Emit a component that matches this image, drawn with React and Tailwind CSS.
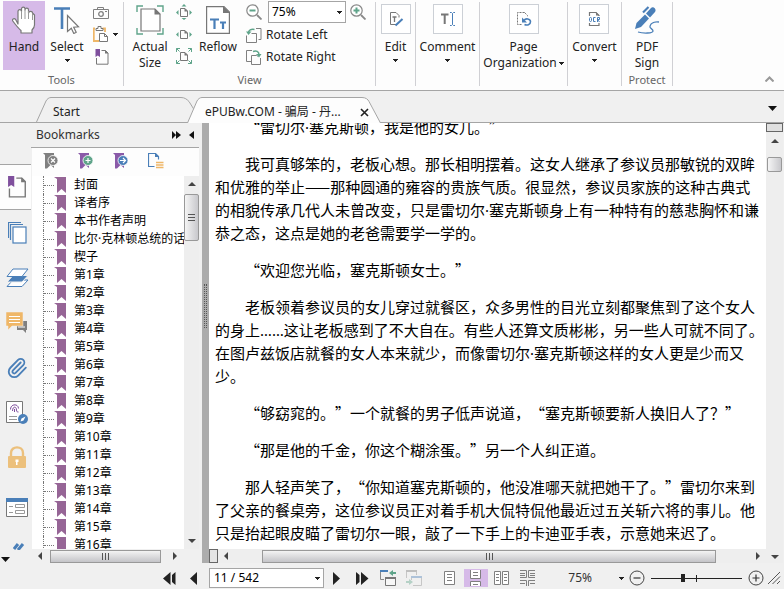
import React from 'react'
import { useState } from 'react'
import { Paperclip } from 'lucide-react'

const chapters = [
  '封面', '译者序', '本书作者声明', '比尔·克林顿总统的话', '楔子',
  '第1章', '第2章', '第3章', '第4章', '第5章', '第6章', '第7章', '第8章',
  '第9章', '第10章', '第11章', '第12章', '第13章', '第14章', '第15章', '第16章',
]

const paragraphs = [
  ['“雷切尔·塞克斯顿，我是他的女儿。”'],
  [
    '我可真够笨的，老板心想。那长相明摆着。这女人继承了参议员那敏锐的双眸',
    '和优雅的举止——那种圆通的雍容的贵族气质。很显然，参议员家族的这种古典式',
    '的相貌传承几代人未曾改变，只是雷切尔·塞克斯顿身上有一种特有的慈悲胸怀和谦',
    '恭之态，这点是她的老爸需要学一学的。',
  ],
  ['“欢迎您光临，塞克斯顿女士。”'],
  [
    '老板领着参议员的女儿穿过就餐区，众多男性的目光立刻都聚焦到了这个女人',
    '的身上……这让老板感到了不大自在。有些人还算文质彬彬，另一些人可就不同了。',
    '在图卢兹饭店就餐的女人本来就少，而像雷切尔·塞克斯顿这样的女人更是少而又',
    '少。',
  ],
  ['“够窈窕的。”一个就餐的男子低声说道，“塞克斯顿要新人换旧人了？”'],
  ['“那是他的千金，你这个糊涂蛋。”另一个人纠正道。'],
  [
    '那人轻声笑了，“你知道塞克斯顿的，他没准哪天就把她干了。”雷切尔来到',
    '了父亲的餐桌旁，这位参议员正对着手机大侃特侃他最近过五关斩六将的事儿。他',
    '只是抬起眼皮瞄了雷切尔一眼，敲了一下手上的卡迪亚手表，示意她来迟了。',
  ],
]

function Caret({ className = '' }) {
  return (
    <svg className={`w-[5px] h-[3px] shrink-0 ${className}`} viewBox="0 0 5 3" shapeRendering="crispEdges">
      <path d="M0 0h5L2.5 3z" fill="#222"/>
    </svg>
  )
}

function Icon({ w = 16, h = 16, children, className = '' }) {
  return (
    <svg width={w} height={h} viewBox={`0 0 ${w} ${h}`} fill="none" className={`shrink-0 ${className}`}>
      {children}
    </svg>
  )
}

/* ---------- ribbon icons ---------- */

function HandIcon() {
  return (
    <Icon w={24} h={28}>
      <path d="M6 18V5.500c0-2.500 3.500-2.500 3.500 0V3c0-2.500 3.500-2.500 3.500 0v1c0-2.500 3.500-2.500 3.500 0v3c.5-2.300 4-2.300 4 0L22.500 9v10c0 2-1 3.500-2.500 5V27H9v-2.500C6 22 3 18 .8 15c-1-1.700 1-3 2.700-1.800z" fill="#fff" stroke="#777" strokeWidth="1.2" strokeLinejoin="round"/>
      <path d="M9.500 5v8M13 4v9M16.500 5v8M20.500 8v6" stroke="#999"/>
    </Icon>
  )
}

function SelectIcon() {
  return (
    <Icon w={26} h={28}>
      <path d="M0 2.5h16M8 2.5V23" stroke="#4a7fb8" strokeWidth="2.6"/>
      <path d="M13.5 9.500v16l3.800-3.300 2.500 5.300 2.400-1.200-2.500-5.100 4.800-.4z" fill="#fff" stroke="#777" strokeWidth="1.2"/>
    </Icon>
  )
}

function CameraIcon() {
  return (
    <Icon w={16} h={13}>
      <path d="M.5 3.5h15v9H.5zM4.5 3.500v-2h6v2" stroke="#808080"/>
      <circle cx="8" cy="8" r="2.3" stroke="#808080" strokeWidth="1.3"/>
      <path d="M12 5.5h2" stroke="#808080"/>
    </Icon>
  )
}

function PasteIcon() {
  return (
    <Icon w={16} h={16}>
      <path d="M2 2.5H.8V15H6M9.500 2.500H12V6" stroke="#efb768" strokeWidth="1.8"/>
      <path d="M3 4.500v-2h2v-2h3v2h2v2z" fill="#fff" stroke="#777"/>
      <path d="M6.500 7.500h5l3 3v5h-8z" fill="#fff" stroke="#777"/>
      <path d="M11.500 7.500v3h3" stroke="#777"/>
    </Icon>
  )
}

function BookmarkPageIcon({ w = 14, h = 16 }) {
  return (
    <svg width={w} height={h} viewBox="0 0 14 16" fill="none" className="shrink-0">
      <path d="M6.500 1.500h4l2.500 2.500v11.200H1.500V9" stroke="#777"/>
      <path d="M10 1l3.500 3.500H10z" fill="#777"/>
      <path d="M.5 0h4.500v8L2.800 6.500.5 8z" fill="#7f4f9d"/>
    </svg>
  )
}

function ActualSizeIcon() {
  return (
    <Icon w={28} h={30}>
      <path d="M1 7V1h6M21 1h6v6M27 23v6h-6M7 29H1v-6" stroke="#5fa48a" strokeWidth="1.4"/>
      <path d="M5 4h14l5 5v17H5z" stroke="#777" strokeWidth="1.2" fill="#fff"/>
      <path d="M18.5 3.500v6H24.500z" fill="#777"/>
    </Icon>
  )
}

function FitIcon({ kind }) {
  return (
    <Icon w={16} h={16}>
      <path d="M4.500 4.500h4.500l2.500 2.500v5.500h-7z" stroke="#777"/>
      <path d="M8.500 4v3.500H12z" fill="#777"/>
      {kind !== 'visible' && <path d="M2.500 6v5L0 8.500zM13.500 6v5L16 8.500z" fill="#5fa48a"/>}
      {kind === 'page' && <path d="M5.500 2.500h5L8 0zM5.500 14h5L8 16z" fill="#5fa48a"/>}
      {kind === 'visible' && (
        <path d="M.5 4V.5H4M12 .5h3.500V4M15.500 12v3.500H12M4 15.500H.5V12M.5.5l3 3M15.500.5l-3 3M15.500 15.500l-3-3M.5 15.500l3-3" stroke="#5fa48a"/>
      )}
    </Icon>
  )
}

function ReflowIcon() {
  return (
    <Icon w={24} h={28}>
      <path d="M.6.6h17.400L23.400 6v21.400H.6z" fill="#fff" stroke="#777" strokeWidth="1.2"/>
      <path d="M17 0v7h7z" fill="#777"/>
      <path d="M4 13.500h9M8.500 13.500V23M14 16.500h6M17 16.500V23" stroke="#4a7fb8" strokeWidth="2.2"/>
    </Icon>
  )
}

function ZoomIcon({ plus }) {
  return (
    <Icon w={16} h={16}>
      <circle cx="6.5" cy="6.5" r="5.7" stroke="#888" strokeWidth="1.2" fill="#fff"/>
      <path d="M11 11l4.500 4.500" stroke="#888" strokeWidth="1.8"/>
      <path d={plus ? 'M3.500 6.500h6M6.500 3.500v6' : 'M3.500 6.500h6'} stroke="#5fa48a" strokeWidth="2"/>
    </Icon>
  )
}

function RotateIcon({ right }) {
  if (right) {
    return (
      <Icon w={16} h={16}>
        <path d="M5 12.500H.5v-11H6M5.500 6.500h5l1 1M5.500 6.500v9h9V9" stroke="#808080"/>
        <path d="M7 2.500c3-1.500 6 0 6 3" stroke="#5fa48a" strokeWidth="1.5"/>
        <path d="M10 5h5.500L13 8.500z" fill="#5fa48a"/>
      </Icon>
    )
  }
  return (
    <Icon w={16} h={16}>
      <path d="M.5 8.500v7h10v-9h-5M10 1.500h5v11h-2.500" stroke="#808080"/>
      <path d="M2.500 6c0-3 2.500-4 6-3.500" stroke="#5fa48a" strokeWidth="1.5"/>
      <path d="M0 4.500h5.500L2.500 8z" fill="#5fa48a"/>
    </Icon>
  )
}

function EditIcon() {
  return (
    <Icon w={16} h={16}>
      <path d="M2.500 1.500h5.500l3 3v2M2.500 1.500v12h6" stroke="#777"/>
      <path d="M4.500 6h4M6.500 6v5" stroke="#777" strokeWidth="1.3"/>
      <path d="M7.500 14.500l7-6.500" stroke="#4a7fb8" strokeWidth="2"/>
    </Icon>
  )
}

function CommentIcon() {
  return (
    <Icon w={16} h={16}>
      <path d="M1 3.500h7.500M4.700 3.500v9.500" stroke="#777" strokeWidth="2"/>
      <path d="M10 1.500h1.500l1 1 1-1H15M10 14.500h1.500l1-1 1 1H15M12.500 2.500v11" stroke="#4a7fb8"/>
    </Icon>
  )
}

function OrganizeIcon() {
  return (
    <Icon w={16} h={16}>
      <path d="M8.500 1.500h-7v12h5M8.500 1.500l3 3v1" stroke="#777" strokeDasharray="2 1"/>
      <path d="M8 9.500c1.500-2.500 6.500-2 6.500 1.200 0 3-3.500 4-6 2.800" stroke="#4a7fb8" strokeWidth="1.6"/>
      <path d="M6 6.500v5h5z" fill="#4a7fb8"/>
    </Icon>
  )
}

function OcrIcon() {
  return (
    <Icon w={16} h={16}>
      <path d="M3.500 5V1.500h6.500l3 3V5M3.500 12v2.500h9.500V12" stroke="#777" strokeWidth="1.2"/>
      <path d="M10 1v3.500h3.500z" fill="#777"/>
      <rect x="3.5" y="6.500" width="2" height="4" rx="1" stroke="#4a7fb8"/>
      <path d="M9.500 6.500h-2v4h2M11.500 11V6.500h2v2h-2l2 2.500" stroke="#4a7fb8"/>
    </Icon>
  )
}

function SignIcon() {
  return (
    <Icon w={26} h={28}>
      <path d="M1 23l1.500-6L11 8.500l4 4L7 21z" fill="#4a7fb8"/>
      <path d="M12 7.500l5-5.500c2-2 6 1 4 4l-5 5.500z" fill="#4a7fb8"/>
      <path d="M9 6.500L14.500 1" stroke="#4a7fb8" strokeWidth="2.2"/>
      <path d="M4 26c5 1.500 15 1.500 15-1 0-2.500-4-2.500-3-5 1-3 5-4.500 9-4" stroke="#4a7fb8" strokeWidth="1.3"/>
    </Icon>
  )
}

/* ---------- side rail icons ---------- */

function PagesIcon() {
  return (
    <Icon w={19} h={22}>
      <path d="M.5 16V.5H13M2.500 18V2.500H15" stroke="#4a7fb8" strokeWidth="1.2"/>
      <rect x="5" y="5" width="13" height="16" fill="#fff" stroke="#4a7fb8" strokeWidth="1.2"/>
    </Icon>
  )
}

function LayersIcon() {
  return (
    <Icon w={23} h={20}>
      <path d="M1 18.500L7 12h15l-6 6.500z" fill="#fff" stroke="#4a7fb8"/>
      <path d="M1 14l6-6.500h15L16 14z" fill="#4a7fb8" stroke="#f0f0f0"/>
      <path d="M1 8.500L7 1h15l-6 7.500z" fill="#fff" stroke="#4a7fb8"/>
    </Icon>
  )
}

function CommentsIcon() {
  return (
    <Icon w={22} h={22}>
      <path d="M11 9h10v9h-1v3l-3-3h-6z" fill="#808080"/>
      <path d="M12 15h7" stroke="#fff"/>
      <path d="M0 0h17v14H6l-4 4v-4H0z" fill="#efb768" stroke="#f0f0f0" strokeWidth=".5"/>
      <path d="M3 4.500h11M3 7.500h11M3 10.500h11" stroke="#fff"/>
    </Icon>
  )
}

function SignatureIcon() {
  return (
    <Icon w={22} h={23}>
      <path d="M.5.500h16v21H.5z" fill="#fff" stroke="#777"/>
      <path d="M4.500 8.500c0-6 8-6 8-1M6.500 10c0-5 4-5 4-1 0 2 1 2 2 2M8.500 11V8" stroke="#7f4f9d"/>
      <path d="M3 15.500h8M3 18.500h8" stroke="#999"/>
      <circle cx="17" cy="18" r="5" fill="#4a7fb8"/>
      <path d="M14.500 20.500l1-3 4-2-2 4z" fill="#fff"/>
    </Icon>
  )
}

function LockIcon() {
  return (
    <Icon w={18} h={23}>
      <path d="M3 11V7c0-7.500 12-7.500 12 0v4" stroke="#ecc07c" strokeWidth="2.4"/>
      <rect y="10" width="18" height="12" rx="1" fill="#ecc07c"/>
      <path d="M7.500 13.500h3v2.500h-1v3h-1.500v-3h-.5z" fill="#fff"/>
    </Icon>
  )
}

function FieldsIcon() {
  return (
    <Icon w={22} h={19}>
      <path d="M.5.500h21v18H.5z" fill="#fff" stroke="#777"/>
      <path d="M0 0h22v4H0z" fill="#4a7fb8"/>
      <path d="M3 8.500h4M3 14.500h4M9.500 6.500h9v3h-9zM9.500 12.500h9v3h-9z" stroke="#999"/>
    </Icon>
  )
}

/* ---------- bookmark panel icons ---------- */

function MarkAction({ color, badge, sign }) {
  return (
    <Icon w={16} h={16}>
      <path d="M0 0h11v15l-3.500-3L4 15.500H2V2z" fill={color}/>
      <circle cx="10" cy="7.5" r="5" fill={badge} stroke="#fff" strokeWidth=".8"/>
      <path d={sign} stroke="#fff" strokeWidth="1.2"/>
    </Icon>
  )
}

function ExpandIcon() {
  return (
    <Icon w={16} h={16}>
      <path d="M6.500 13.500h-6V.5h7l3 3v3" stroke="#4a7fb8" strokeWidth="1.2"/>
      <path d="M7 0v4h4z" fill="#4a7fb8"/>
      <path d="M8 9.500h7.500M8 12h7.500M8 14.500h7.500" stroke="#efb768" strokeWidth="1.5"/>
    </Icon>
  )
}

/* ---------- ribbon pieces ---------- */

function RibbonButton({ icon, label, lines, caret, inlineCaret, boxed, className = '' }) {
  return (
    <button className={`flex flex-col items-center shrink-0 text-xs ${className}`}>
      <span className={boxed
        ? 'flex items-center justify-center w-[30px] h-[30px] border border-[#ccd0d6] bg-white mb-[5px]'
        : 'flex items-center justify-center h-8 mb-[3px]'}>
        {icon}
      </span>
      {(lines || [label]).map((line, i, all) => (
        <span key={line} className="flex items-center gap-0.5 h-4 leading-4 whitespace-nowrap">
          {line}
          {inlineCaret && i === all.length - 1 && <Caret/>}
        </span>
      ))}
      {caret && <Caret className="mt-1"/>}
    </button>
  )
}

function GroupLabel({ children }) {
  return <div className="h-3 shrink-0 leading-3 text-center text-[11px] text-[#666]">{children}</div>
}

function Ribbon({ zoom, setZoom }) {
  return (
    <header className="flex h-[91px] shrink-0 pt-px bg-[#fdfdfd] border-b border-[#a5a5a5]">
      <section className="flex flex-col w-[124px] shrink-0 mt-px mb-1 border-r border-[#d0d0d4]">
        <div className="flex flex-1 min-h-0 pl-[3px]">
          <RibbonButton icon={<HandIcon/>} label="Hand" className="w-[42px] h-[69px] -mt-px pt-[3px] bg-[#d6bae8]"/>
          <RibbonButton icon={<SelectIcon/>} label="Select" caret className="w-11 pt-0.5"/>
          <div className="flex flex-col gap-[7px] pl-1 pt-1">
            <button aria-label="Snapshot"><CameraIcon/></button>
            <button aria-label="Clipboard" className="flex items-center gap-1"><PasteIcon/><Caret/></button>
            <button aria-label="Bookmark" className="pl-0.5"><BookmarkPageIcon/></button>
          </div>
        </div>
        <GroupLabel>Tools</GroupLabel>
      </section>

      <section className="flex flex-col w-[252px] shrink-0 mt-px mb-1 border-r border-[#d0d0d4]">
        <div className="flex flex-1 min-h-0">
          <RibbonButton icon={<ActualSizeIcon/>} lines={['Actual', 'Size']} className="w-[52px] pt-0.5"/>
          <div className="flex flex-col gap-1.5 pt-0.5">
            <button aria-label="Fit page"><FitIcon kind="page"/></button>
            <button aria-label="Fit width"><FitIcon kind="width"/></button>
            <button aria-label="Fit visible"><FitIcon kind="visible"/></button>
          </div>
          <RibbonButton icon={<ReflowIcon/>} label="Reflow" className="w-[52px] pt-0.5"/>
          <div className="flex flex-col pl-0.5 text-xs">
            <div className="flex items-center gap-1.5 h-[22px] -mt-px">
              <button aria-label="Zoom out"><ZoomIcon/></button>
              <label className="relative flex">
                <select aria-label="Zoom" value={zoom} onChange={e => setZoom(e.target.value)}
                  className="appearance-none w-[78px] h-[22px] pl-[3px] bg-white border border-[#a5a5a5] text-xs text-black outline-none">
                  <option>75%</option>
                  <option>100%</option>
                </select>
                <Caret className="absolute right-1 top-[10px] pointer-events-none"/>
              </label>
              <button aria-label="Zoom in" className="-ml-0.5"><ZoomIcon plus/></button>
            </div>
            <button className="flex items-center gap-1 h-[22px] mt-px"><RotateIcon/>Rotate Left</button>
            <button className="flex items-center gap-1 h-[22px]"><RotateIcon right/>Rotate Right</button>
          </div>
        </div>
        <GroupLabel>View</GroupLabel>
      </section>

      <div className="flex w-10 mt-px mb-1 shrink-0 justify-center border-r border-[#d0d0d4]">
        <RibbonButton boxed icon={<EditIcon/>} label="Edit" caret className="pt-0.5"/>
      </div>
      <div className="flex w-16 mt-px mb-1 shrink-0 justify-center border-r border-[#d0d0d4]">
        <RibbonButton boxed icon={<CommentIcon/>} label="Comment" caret className="pt-0.5"/>
      </div>
      <div className="flex w-[88px] mt-px mb-1 shrink-0 justify-center border-r border-[#d0d0d4]">
        <RibbonButton boxed icon={<OrganizeIcon/>} lines={['Page', 'Organization']} inlineCaret className="pt-0.5"/>
      </div>
      <div className="flex w-[54px] mt-px mb-1 shrink-0 justify-center border-r border-[#d0d0d4]">
        <RibbonButton boxed icon={<OcrIcon/>} label="Convert" caret className="pt-0.5"/>
      </div>
      <section className="flex flex-col w-[51px] shrink-0 mt-px mb-1 border-r border-[#d0d0d4]">
        <div className="flex flex-1 min-h-0 justify-center">
          <RibbonButton icon={<SignIcon/>} lines={['PDF', 'Sign']} className="pt-0.5"/>
        </div>
        <GroupLabel>Protect</GroupLabel>
      </section>
      <button aria-label="Collapse ribbon" className="self-end ml-auto mr-2.5 mb-2">
        <Icon w={9} h={6}><path d="M.5 5.500l4-4 4 4" stroke="#999" strokeWidth="2"/></Icon>
      </button>
    </header>
  )
}

function TabBar() {
  return (
    <nav className="flex items-end h-8 shrink-0 border-b border-[#a5a5a5] bg-[#f0f0f0] pl-9 text-xs">
      <button className="relative flex items-center w-[158px] h-[25px] pl-[17px] pt-1 text-left">
        <svg className="absolute inset-0" width="158" height="25" fill="none">
          <path d="M.5 25L10 4C11 2 13 .5 15 .5h130c4 0 6 2 8 4l5 8" stroke="#a5a5a5"/>
        </svg>
        <span className="relative">Start</span>
      </button>
      <div className="relative flex items-center justify-between w-[194px] h-[26px] -mb-px -ml-[7px] pl-[18px] pr-3 pt-1">
        <svg className="absolute inset-0" width="194" height="26" fill="none">
          <path d="M.5 26L10 4C11 2 13 .5 15 .5h160c4 0 6 2 7 4L193.500 26" fill="#fdfdfd" stroke="#a5a5a5"/>
        </svg>
        <button className="relative whitespace-nowrap">ePUBw.COM - 骗局 - 丹...</button>
        <button aria-label="Close tab" className="relative">
          <Icon w={9} h={9}><path d="M1 1l7 7M8 1L1 8" stroke="#222" strokeWidth="1.6"/></Icon>
        </button>
      </div>
      <button aria-label="Tab list" className="ml-auto mr-[7px] mb-[11px]">
        <Icon w={9} h={5}><path d="M0 0h9L4.500 5z" fill="#111"/></Icon>
      </button>
    </nav>
  )
}

function SideRail() {
  return (
    <aside className="flex flex-col w-8 shrink-0 bg-[#f0f0f0] overflow-hidden">
      <div className="h-[25px] shrink-0"/>
      <div className="h-4 shrink-0 border-r border-[#a5a5a5]"/>
      <button aria-label="Bookmarks" className="flex items-center justify-center h-[46px] pl-0.5 shrink-0 bg-[#fdfdfd] border-y border-[#a5a5a5]">
        <BookmarkPageIcon w={20} h={22}/>
      </button>
      <div className="flex flex-col flex-1 min-h-0 border-r border-[#a5a5a5]">
        <div className="flex flex-col flex-1 min-h-0 pl-[3px] overflow-hidden">
          <button aria-label="Pages" className="flex items-center justify-center h-[45px] shrink-0"><PagesIcon/></button>
          <button aria-label="Layers" className="flex items-center justify-center h-[45px] shrink-0"><LayersIcon/></button>
          <button aria-label="Comments" className="flex items-center justify-center h-[45px] shrink-0"><CommentsIcon/></button>
          <button aria-label="Attachments" className="flex items-center justify-center h-[45px] shrink-0">
            <Paperclip size={22} color="#4a7fb8" strokeWidth={2}/>
          </button>
          <button aria-label="Signatures" className="flex items-center justify-center h-[45px] shrink-0"><SignatureIcon/></button>
          <button aria-label="Security" className="flex items-center justify-center h-[45px] shrink-0"><LockIcon/></button>
          <button aria-label="Fields" className="flex items-center justify-center h-[55px] shrink-0"><FieldsIcon/></button>
          <button aria-label="Sign" className="flex justify-end pr-1.5 pt-2 shrink-0">
            <Icon w={12} h={12}><path d="M1 6l4-5M5 7l5-6" stroke="#4a7fb8" strokeWidth="3"/></Icon>
          </button>
        </div>
        <button aria-label="More panels" className="flex items-center h-[13px] pt-1.5 shrink-0">
          <Icon w={9} h={5} className="ml-px"><path d="M0 0h9L4.500 5z" fill="#111"/></Icon>
        </button>
      </div>
    </aside>
  )
}

function Arrow({ d }) {
  return <Icon w={8} h={8}><path d={d} fill="#444"/></Icon>
}

const UP = 'M0 6h8L4 2z'
const DOWN = 'M0 2h8L4 6z'
const LEFT = 'M6 0v8L2 4z'
const RIGHT = 'M2 0v8l4-4z'

function BookmarkPanel() {
  return (
    <div className="flex flex-col w-[171px] shrink-0 bg-[#f0f0f0] pr-[3px] -ml-px">
      <div className="flex items-center h-[25px] shrink-0 pl-[5px] text-xs text-[#333] border-b border-[#a5a5a5]">
        <h2>Bookmarks</h2>
        <button aria-label="Expand all" className="ml-auto mr-2">
          <Icon w={9} h={8}><path d="M0 0v8l4-4zM4 0v8l5-4z" fill="#111"/></Icon>
        </button>
        <button aria-label="Hide panel" className="mr-[5px]">
          <Icon w={5} h={8}><path d="M5 0v8L0 4z" fill="#111"/></Icon>
        </button>
      </div>
      <div className="flex items-center gap-[19px] h-7 shrink-0 pl-[11px] pb-0.5 ml-px bg-[#fdfdfd]">
        <button aria-label="Delete bookmark"><MarkAction color="#808080" badge="#808080" sign="M8 5.500l4 4M12 5.500l-4 4"/></button>
        <button aria-label="Add bookmark"><MarkAction color="#8a5aa8" badge="#5fa48a" sign="M10 5v5M7.500 7.500h5"/></button>
        <button aria-label="Go to bookmark"><MarkAction color="#8a5aa8" badge="#4a7fb8" sign="M7 7.500h5M10 5l2.500 2.500L10 10"/></button>
        <button aria-label="Expand current"><ExpandIcon/></button>
      </div>
      <div className="flex flex-1 min-h-0 ml-px">
        <ul className="flex-1 min-w-0 overflow-hidden bg-white text-xs text-black">
          {chapters.map(name => (
            <li key={name} className="flex items-center h-[18px] ml-[11px] border-l border-dotted border-[#777]">
              <span className="w-[10px] shrink-0 border-t border-dotted border-[#777]"/>
              <Icon w={12} h={18}><path d="M0 1h12v16l-4.500-4L3 17V3z" fill="#966596"/></Icon>
              <a href="#page" className="ml-2 leading-[18px] whitespace-nowrap">{name}</a>
            </li>
          ))}
        </ul>
        <div className="flex flex-col items-center w-[15px] shrink-0 bg-[#eee] pt-1">
          <Arrow d={UP}/>
          <div className="flex flex-col items-center justify-center gap-0.5 w-[15px] h-[47px] mt-1.5 border border-[#999] rounded-xs bg-linear-to-r from-[#f5f5f5] to-[#c8c8cc]">
            <i className="w-[7px] h-px bg-[#555]"/>
            <i className="w-[7px] h-px bg-[#555]"/>
            <i className="w-[7px] h-px bg-[#555]"/>
          </div>
          <div className="mt-auto mb-1"><Arrow d={DOWN}/></div>
        </div>
      </div>
      <div className="flex items-center h-[14px] shrink-0 ml-px pr-5">
        <div className="ml-1 mr-[6px]"><Arrow d={LEFT}/></div>
        <div className="flex items-center justify-center gap-0.5 flex-1 h-[13px] border border-[#999] bg-linear-to-b from-[#f3f3f3] to-[#c4c4c8]">
          <i className="w-px h-[7px] bg-[#555]"/>
          <i className="w-px h-[7px] bg-[#555]"/>
          <i className="w-px h-[7px] bg-[#555]"/>
        </div>
        <div className="ml-2.5"><Arrow d={RIGHT}/></div>
      </div>
    </div>
  )
}

// The interpunct and the ellipsis are set in the Latin face, where they are narrow
// and sit on the baseline.
function Line({ text }) {
  return text.split(/(·|……)/).map((part, i) => (
    i % 2
      ? <span key={i} className="font-['Noto_Sans',sans-serif] leading-none">{part}</span>
      : <React.Fragment key={i}>{part}</React.Fragment>
  ))
}

function Document() {
  return (
    <main className="flex flex-1 min-w-0">
      <div className="flex flex-col flex-1 min-w-0">
        <article className="flex-1 min-h-0 overflow-hidden bg-white pl-1.5">
          <div className="-mt-2 font-['Noto_Sans_CJK_SC',sans-serif] text-[15px] leading-[23px] text-black [text-spacing-trim:space-all]">
            {paragraphs.map((lines, i) => (
              <p key={i} className="mb-[14px] indent-[30px] whitespace-nowrap">
                {lines.map((line, j) => (
                  <React.Fragment key={j}>
                    {j > 0 && <br/>}
                    <Line text={line}/>
                  </React.Fragment>
                ))}
              </p>
            ))}
          </div>
        </article>
        <div className="flex items-center h-[14px] shrink-0 bg-[#eee]">
          <div className="w-[9px] h-[14px] border border-[#666] bg-[#e4e4e4]"/>
          <div className="ml-1 mr-[32px]"><Arrow d={LEFT}/></div>
          <div className="flex items-center justify-center gap-0.5 flex-1 h-[13px] border border-[#999] bg-linear-to-b from-[#f3f3f3] to-[#c4c4c8]">
            <i className="w-px h-[7px] bg-[#555]"/>
            <i className="w-px h-[7px] bg-[#555]"/>
            <i className="w-px h-[7px] bg-[#555]"/>
          </div>
          <div className="ml-[38px] mr-1"><Arrow d={RIGHT}/></div>
        </div>
      </div>
      <div className="flex flex-col items-center w-[17px] shrink-0 mr-px bg-[#eee]">
        <div className="w-[17px] h-[9px] shrink-0 border border-[#666] bg-[#e0e0e0]"/>
        <div className="mt-[5px]"><Arrow d={UP}/></div>
        <div className="w-[15px] h-[15px] mt-3 border border-[#999] rounded-xs bg-linear-to-r from-[#f5f5f5] to-[#c8c8cc]"/>
        <div className="mt-auto mb-0.5"><Arrow d={DOWN}/></div>
      </div>
    </main>
  )
}

/* ---------- status bar ---------- */

function PageGlyph({ kind }) {
  if (kind === 'single') return <Icon w={12} h={15}><path d="M.5.500h10v13H.5z" fill="#fff" stroke="#808080"/><path d="M3 3.500h5M3 6.500h5M3 9.500h5" stroke="#808080"/></Icon>
  if (kind === 'scroll') return <Icon w={12} h={16}><path d="M.5 0v8.500h10V0M.5 16v-4.500h10V16" fill="#fff" stroke="#808080"/><path d="M3 2.500h5M3 5.500h5M3 14.500h5" stroke="#808080"/></Icon>
  if (kind === 'facing') return <Icon w={16} h={15}><path d="M.5.500h6v13h-6zM8.500.500h6v13h-6z" fill="#fff" stroke="#808080"/><path d="M2 3.500h3M2 6.500h3M2 9.500h3M10 3.500h3M10 6.500h3M10 9.500h3" stroke="#808080"/></Icon>
  return <Icon w={16} h={16}><path d="M0 .5h6.500v7H0M15 .5H8.500v7H15M0 10.500h6.500V16M15 10.500H8.500V16" stroke="#808080"/><path d="M0 3.500h5M0 5.500h5M10 3.500h5M10 5.500h5M0 13.500h5M10 13.500h5" stroke="#808080"/></Icon>
}

function StatusBar({ zoom }) {
  const [page, setPage] = useState('11 / 542')
  const [scale, setScale] = useState(35)

  return (
    <footer className="flex items-center h-[26px] shrink-0 pt-1 pl-[163px] pr-[3px] bg-[#f0f0f0] text-xs">
      <button aria-label="First page"><Icon w={13} h={13}><path d="M7.500 0v13L0 6.500zM12.500 0v13L9 10V3z" fill="#222"/></Icon></button>
      <button aria-label="Previous page" className="ml-3.5"><Icon w={7} h={13}><path d="M7 0v13L0 6.500z" fill="#222"/></Icon></button>
      <label className="relative flex ml-3">
        <select aria-label="Page" value={page} onChange={e => setPage(e.target.value)}
          className="appearance-none w-[115px] h-5 pl-1 bg-white border border-[#a5a5a5] text-xs text-black outline-none">
          <option>11 / 542</option>
          <option>12 / 542</option>
        </select>
        <Caret className="absolute right-1 top-[9px] pointer-events-none"/>
      </label>
      <button aria-label="Next page" className="ml-[9px]"><Icon w={7} h={13}><path d="M0 0v13l7-6.500z" fill="#222"/></Icon></button>
      <button aria-label="Last page" className="ml-4"><Icon w={13} h={13}><path d="M0 0l3.500 3v7L0 13zM5 0v13l7.500-6.500z" fill="#222"/></Icon></button>
      <button aria-label="Previous view" className="ml-[11px]">
        <Icon w={16} h={16}>
          <path d="M4 9.500H.5v-9H7" stroke="#888"/><path d="M0 1h8" stroke="#4a7fb8" strokeWidth="2"/>
          <path d="M5.500 7.500h10v8h-10z" fill="#f7f7f7" stroke="#777"/><path d="M5 8h11" stroke="#777" strokeWidth="2"/>
          <path d="M9 3l4-3v2h3v2h-3v2z" fill="#5fa48a"/>
        </Icon>
      </button>
      <button aria-label="Next view" className="ml-2.5 opacity-40">
        <Icon w={16} h={16}>
          <path d="M.5 8V.5h10V5" stroke="#888"/><path d="M0 1h11" stroke="#777" strokeWidth="2"/>
          <path d="M7 15.500h8.500v-9h-10V10" stroke="#888"/><path d="M5 7h11" stroke="#4a7fb8" strokeWidth="2"/>
          <path d="M7 12l-4-3v2H0v2h3v2z" fill="#5fa48a"/>
        </Icon>
      </button>
      <button aria-label="Single page" className="ml-[22px]"><PageGlyph kind="single"/></button>
      <button aria-label="Continuous" className="flex items-center justify-center w-6 h-[18px] ml-2 bg-[#d6bae8]"><PageGlyph kind="scroll"/></button>
      <button aria-label="Facing" className="ml-1.5"><PageGlyph kind="facing"/></button>
      <button aria-label="Continuous facing" className="ml-2.5"><PageGlyph kind="spread"/></button>
      <button className="flex items-center gap-[27px] ml-auto text-[#333]">{zoom}<Caret/></button>
      <button aria-label="Smaller" className="ml-[5px]">
        <Icon w={16} h={16}><circle cx="8" cy="8" r="7" stroke="#444"/><path d="M4.500 8h7" stroke="#333" strokeWidth="1.2"/></Icon>
      </button>
      <input type="range" aria-label="Scale" value={scale} onChange={e => setScale(e.target.value)}
        className="appearance-none w-[91px] h-2.5 mx-1.5 bg-[linear-gradient(#222,#222),linear-gradient(#222,#222)] bg-no-repeat bg-[length:100%_1px,1px_7px] bg-[position:center,45px_center] [&::-webkit-slider-thumb]:appearance-none [&::-webkit-slider-thumb]:w-1 [&::-webkit-slider-thumb]:h-2 [&::-webkit-slider-thumb]:bg-[#222]"/>
      <button aria-label="Larger">
        <Icon w={16} h={16}><circle cx="8" cy="8" r="7" stroke="#444"/><path d="M4.500 8h7M8 4.500v7" stroke="#333" strokeWidth="1.2"/></Icon>
      </button>
      <Icon w={13} h={14} className="ml-1"><path d="M0 13L12 1M4.500 13L12 5.500M9 13l3-3" stroke="#555"/></Icon>
    </footer>
  )
}

export default function App() {
  const [zoom, setZoom] = useState('75%')

  return (
    <div className="flex flex-col h-screen overflow-hidden bg-[#f0f0f0] text-[#222] font-['Noto_Sans','Noto_Sans_CJK_SC',sans-serif]">
      <Ribbon zoom={zoom} setZoom={setZoom}/>
      <TabBar/>
      <div className="flex flex-1 min-h-0">
        <SideRail/>
        <BookmarkPanel/>
        <div className="flex flex-col items-center w-[7px] shrink-0 bg-[#acacac]">
          <div className="w-[3px] h-11 mt-[161px] border-x border-dotted border-[#555]"/>
        </div>
        <Document/>
      </div>
      <StatusBar zoom={zoom}/>
    </div>
  )
}
